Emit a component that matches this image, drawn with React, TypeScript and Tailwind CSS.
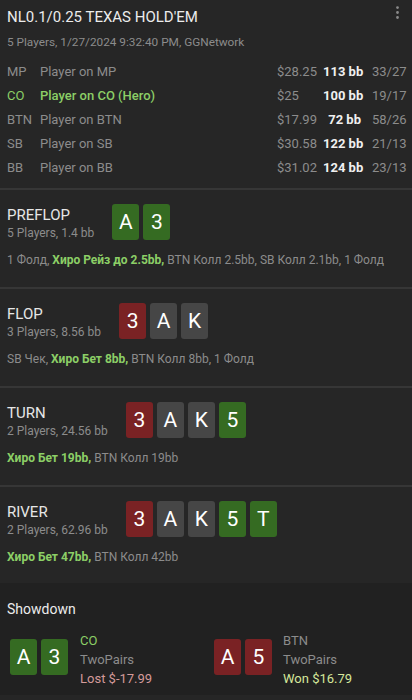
import { EllipsisVertical } from "lucide-react"

type Suit = "green" | "red" | "gray"

const players = [
  { pos: "MP", name: "Player on MP", stack: "$28.25", bb: "113 bb", stats: "33/27" },
  { pos: "CO", name: "Player on CO (Hero)", stack: "$25", bb: "100 bb", stats: "19/17", hero: true },
  { pos: "BTN", name: "Player on BTN", stack: "$17.99", bb: "72 bb", stats: "58/26" },
  { pos: "SB", name: "Player on SB", stack: "$30.58", bb: "122 bb", stats: "21/13" },
  { pos: "BB", name: "Player on BB", stack: "$31.02", bb: "124 bb", stats: "23/13" },
]

const cardBg: Record<Suit, string> = {
  green: "bg-[#356b22]",
  red: "bg-[#7a2224]",
  gray: "bg-[#464646]",
}

function Card({ rank, suit }: { rank: string; suit: Suit }) {
  return (
    <div
      className={`flex h-[36px] w-[27px] items-center justify-center rounded-[3px] text-[21px] leading-none text-white ${cardBg[suit]}`}
    >
      {rank}
    </div>
  )
}

const flop: [string, Suit][] = [
  ["3", "red"],
  ["A", "gray"],
  ["K", "gray"],
]

function Street({
  name,
  info,
  cards,
  children,
  last,
}: {
  name: string
  info: string
  cards: [string, Suit][]
  children: React.ReactNode
  last?: boolean
}) {
  return (
    <section className={`px-[7px] pt-[14px] ${last ? "pb-[18px]" : "pb-[19px] border-b-2 border-[#363636]"}`}>
      <div className="flex items-start gap-[18px]">
        <div className="mt-[1px]">
          <div className="text-[15px] leading-[20px] text-[#e6e6e6]">{name}</div>
          <div className="text-[12px] leading-[16px] text-[#8c8c8c]">{info}</div>
        </div>
        <div className="flex gap-[4px]">
          {cards.map(([r, s], i) => (
            <Card key={i} rank={r} suit={s} />
          ))}
        </div>
      </div>
      <p className="mt-[11px] whitespace-nowrap text-[12px] leading-[16px] text-[#8c8c8c]">{children}</p>
    </section>
  )
}

function Hero({ children }: { children: React.ReactNode }) {
  return <span className="font-bold text-[#8ccf66]">{children}</span>
}

export default function App() {
  return (
    <main className="min-h-[700px] w-[412px] bg-[#262626] font-['Roboto',sans-serif]">
      {/* Header */}
      <header className="relative border-b-2 border-[#363636] px-[7px] pb-[8px] pt-[6px]">
        <EllipsisVertical className="absolute right-[6px] top-[4px] h-[17px] w-[17px] text-[#8a8a8a]" />
        <h1 className="text-[15px] leading-[22px] text-[#ececec]">NL0.1/0.25 TEXAS HOLD'EM</h1>
        <p className="mt-[6px] text-[11.8px] leading-[16px] text-[#8c8c8c]">
          5 Players, 1/27/2024 9:32:40 PM, GGNetwork
        </p>
        <div className="mt-[10px]">
          {players.map((p) => (
            <div key={p.pos} className="flex h-[24px] items-center whitespace-nowrap text-[13px]">
              <span className={`w-[33px] ${p.hero ? "text-[#8ccf66]" : "text-[#8c8c8c]"}`}>{p.pos}</span>
              <span className={`flex-1 ${p.hero ? "font-medium text-[#8ccf66]" : "text-[#8c8c8c]"}`}>{p.name}</span>
              <span className="w-[46px] text-[#8c8c8c]">{p.stack}</span>
              <span className="w-[38px] text-right font-bold text-[#f0f0f0]">{p.bb}</span>
              <span className="ml-[11px] w-[33px] text-[#8c8c8c]">{p.stats}</span>
            </div>
          ))}
        </div>
      </header>

      <Street name="PREFLOP" info="5 Players, 1.4 bb" cards={[["A", "green"], ["3", "green"]]}>
        1 Фолд, <Hero>Хиро Рейз до 2.5bb,</Hero> BTN Колл 2.5bb, SB Колл 2.1bb, 1 Фолд
      </Street>
      <Street name="FLOP" info="3 Players, 8.56 bb" cards={flop}>
        SB Чек, <Hero>Хиро Бет 8bb,</Hero> BTN Колл 8bb, 1 Фолд
      </Street>
      <Street name="TURN" info="2 Players, 24.56 bb" cards={[...flop, ["5", "green"]]}>
        <Hero>Хиро Бет 19bb,</Hero> BTN Колл 19bb
      </Street>
      <Street name="RIVER" info="2 Players, 62.96 bb" cards={[...flop, ["5", "green"], ["T", "green"]]} last>
        <Hero>Хиро Бет 47bb,</Hero> BTN Колл 42bb
      </Street>

      {/* Showdown */}
      <section className="bg-[#212121] px-[7px] pb-[20px] pt-[16px]">
        <h2 className="text-[14px] leading-[20px] text-[#ececec]">Showdown</h2>
        <div className="mt-[20px] flex pl-[3px]">
          <div className="flex h-[36px] w-[204px] items-center gap-[12px]">
            <div className="flex gap-[4px]">
              <Card rank="A" suit="green" />
              <Card rank="3" suit="green" />
            </div>
            <div className="mt-[4px] whitespace-nowrap text-[13px] leading-[19px]">
              <div className="text-[#8ccf66]">CO</div>
              <div className="text-[#8c8c8c]">TwoPairs</div>
              <div className="text-[#d49a9a]">Lost $-17.99</div>
            </div>
          </div>
          <div className="flex h-[36px] items-center gap-[11px]">
            <div className="flex gap-[4px]">
              <Card rank="A" suit="red" />
              <Card rank="5" suit="red" />
            </div>
            <div className="mt-[4px] whitespace-nowrap text-[13px] leading-[19px]">
              <div className="text-[#8c8c8c]">BTN</div>
              <div className="text-[#8c8c8c]">TwoPairs</div>
              <div className="text-[#d6e89c]">Won $16.79</div>
            </div>
          </div>
        </div>
      </section>
    </main>
  )
}
